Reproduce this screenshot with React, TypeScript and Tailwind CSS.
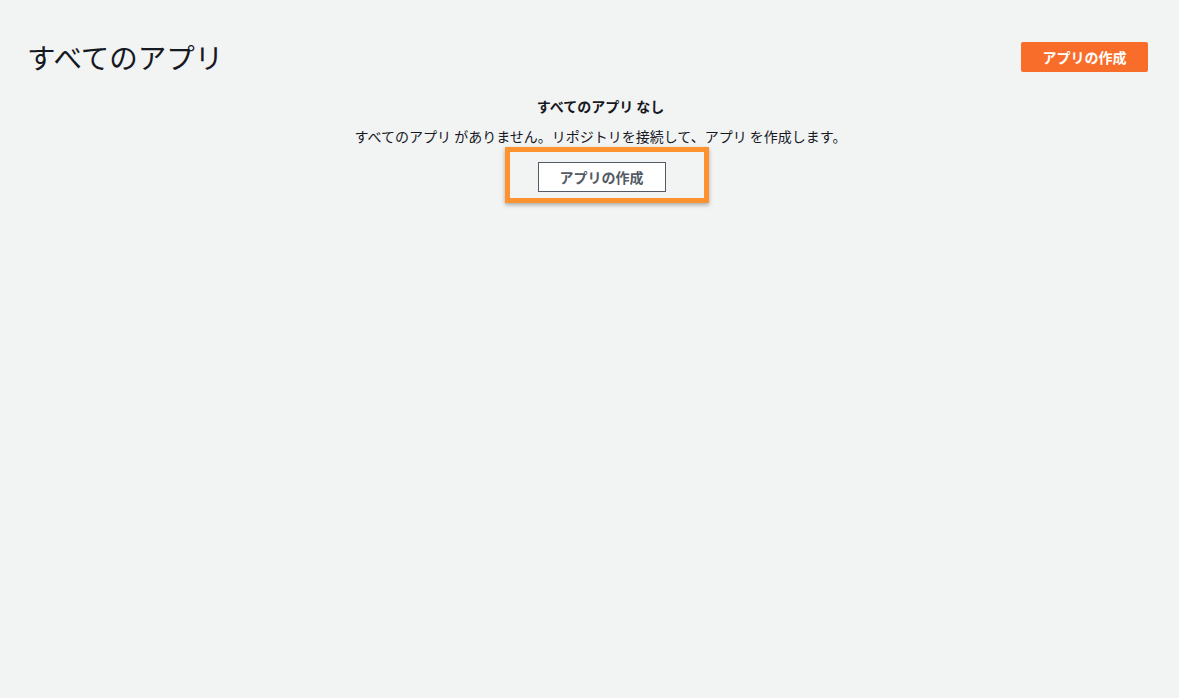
import React from 'react';

const font = { fontFamily: '"Noto Sans CJK JP", "Noto Sans", sans-serif' };

export default function App() {
    return (
        <div className="min-h-[698px] w-full bg-[#f2f3f3] text-[#16191f]" style={font}>
            {/* Header */}
            <div className="flex items-center justify-between pl-[27px] pr-[31px] pt-[42px]">
                <h1 className="text-[28.5px] leading-[30px] font-normal">すべてのアプリ</h1>
                <button className="h-[30px] w-[127px] rounded-[2px] bg-[#f96d2b] text-[14px] font-bold text-white">
                    アプリの作成
                </button>
            </div>

            {/* Empty state */}
            <div className="flex flex-col items-center pl-[22px] pt-[25px]">
                <div className="text-[14px] font-bold leading-[18px]">すべてのアプリ なし</div>
                <p className="mt-[12px] text-[14px] leading-[18px]">
                    すべてのアプリ がありません。リポジトリを接続して、アプリ を作成します。
                </p>
                <div className="relative mt-[17px] ml-[2px]">
                    <span className="pointer-events-none absolute -left-[33px] -right-[43px] -top-[15px] -bottom-[11px] border-[5px] border-[#fd922f] shadow-[0_2px_4px_rgba(0,0,0,0.3)]" />
                    <button className="relative h-[30px] w-[128px] border border-[#545b64] bg-white text-[14px] font-bold text-[#545b64]">
                        アプリの作成
                    </button>
                </div>
            </div>
        </div>
    );
}
